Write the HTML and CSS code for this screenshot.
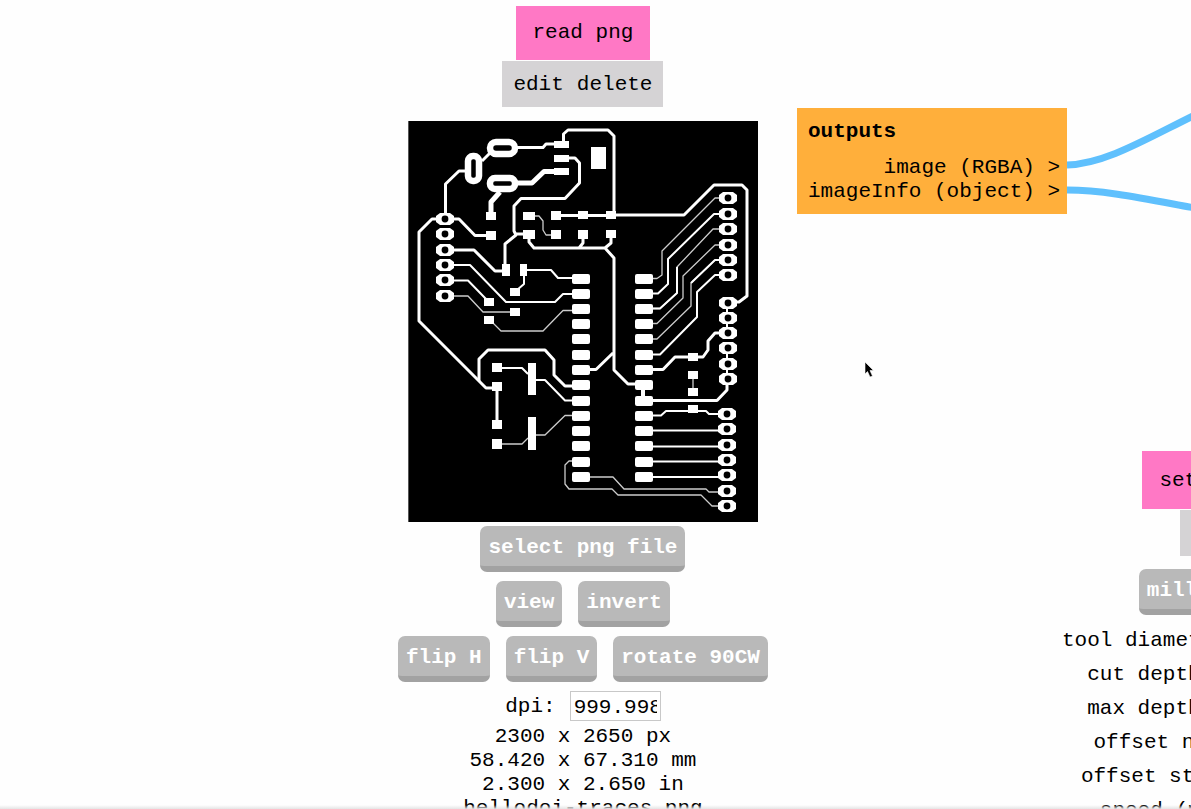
FILE: index.html
```html
<!DOCTYPE html>
<html lang="en">
<head>
<meta charset="utf-8">
<title>mods</title>
<link rel="stylesheet" href="styles.css">
</head>
<body>
<main class="workspace">
  <svg class="wires" aria-hidden="true">
    <path d="M1067 165C1105 164 1146 139 1195 115"/>
    <path d="M1067 190C1105 190 1146 199 1195 208"/>
  </svg>

  <section class="module module-read">
    <h2 class="title">read png</h2>
    <div class="actions"><button type="button">edit</button><button type="button">delete</button></div>
    <svg class="board" viewBox="0 3 350 401" role="img" aria-label="Circuit board traces">
      <defs>
        <g id="pin">
          <path d="M-5-6H5L9-3V3L5 6H-5L-9 3V-3Z" fill="#fff"/>
          <circle r="3.4" fill="#000"/>
        </g>
        <path id="pad" d="M2 0H16Q18 0 18 2V8Q18 10 16 10H2Q0 10 0 8V2Q0 0 2 0Z" fill="#fff"/>
      </defs>
      <rect y="3" width="350" height="401" fill="#000"/>
      <path d="M.5 3V404" stroke="#555"/>
      <g fill="none" stroke="#fff" stroke-linejoin="round">
        <g stroke-width="1.3" stroke="#ccc">
          <path d="M127 98H131L135 103V112L138 117H143"/>
          <path d="M46 178H60L75 194H102M84 204L93 213H135L155 192.500H164"/>
          <path d="M311 80H307L254 133V157L249 160.500H245M311 111H305L269 149V175L252 190.500H245M311 127H307L275 158V180L249 205.500H245M307 142L283 165V188L249 221H245"/>
          <path d="M94 326H114L120 320M128 317H137L157 297.500H164M164 343H161L157 347V366L161 371H204L210 377H293L304 388H311"/>
          <path d="M181 359H205L216 371H298L301 374H311M285 261V271"/>
        </g>
        <g stroke-width="2">
          <path d="M46 147H62L98 184H147L155 176H164M46 162.500H60L78 181M119 152H143L150 160H164M116 157V166L109 172"/>
          <path d="M311 96H306L260 141V166L250 175.500H245M311 142H307L283 165M311 157H307L289 174V199L252 236.500H245M269 149V175L252 190.500H245"/>
          <path d="M94 250H114L120 256M128 262H137L157 282.500H164M319 185V215M319 230V261"/>
          <path d="M245 297.500H253L258 293H298L301 296H311M245 312.500H311M245 328.500H311M245 343.500H311M245 359H311"/>
        </g>
        <g stroke-width="3">
          <path d="M109 29.500H135L138 26H147M155.500 24V16L160 12H200L206 18V97H276L306 67H334L339 72V178L331 184H325"/>
          <path d="M161 40H167L171.500 45V65L157 80.500H113L106 88V113L108 117L97 126V154M106 116H120"/>
          <path d="M57 53H51L37.500 66V98M82 35L74 43M30 101H24L11 114V203L78 270H88M46 101H51L67 117.500H78M46 132H66L87 153H96"/>
          <path d="M148 97.500H202M121 121V124L126 130H197M175 121V125L171 130M203 120V125L197 130L206 140V252L220 266H230M181 251.500H188L205 235"/>
          <path d="M71 263V241L80 232H137L146 242V257L157 268H164M89 269V304"/>
          <path d="M245 251.500H255L267 239H295L300 232V223L307 215H311M319 261V272L309 282.500H245"/>
        </g>
        <path d="M147 53.500H136L124 65H109M92 74L83 84V95" stroke-width="5"/>
        <path d="M235 265V284" stroke-width="4"/>
      </g>
      <g fill="#fff">
        <path d="M146 23h15v7h-15zM146 37h15v7h-15zM146 50h15v7h-15zM183 29h15v22h-15zM78 94h10v8h-10zM78 113h10v9h-10zM115 94h12v8h-12zM115 112h12v9h-12zM143 93h10v9h-10zM143 112h10v9h-10zM170 93h10v8h-10zM170 112h10v9h-10zM198 93h10v8h-10zM198 112h10v8h-10z"/>
        <path d="M94 146h8v12h-8zM112 146h7v12h-7zM102 170h10v8h-10zM76 180h10v8h-10zM76 198h10v8h-10zM102 190h10v8h-10zM84 245h10v9h-10zM84 264h10v9h-10zM84 302h10v9h-10zM84 321h10v10h-10zM120 245h8v32h-8zM120 299h8v33h-8z"/>
        <path d="M280 235h10v8h-10zM280 253h10v8h-10zM280 270h10v8h-10zM280 287h10v8h-10z"/>
      </g>
      <g fill="#000" stroke="#fff" stroke-width="6.500">
        <rect x="82" y="24" width="25" height="12" rx="6"/>
        <rect x="60" y="38" width="11" height="25" rx="5"/>
        <rect x="82" y="60" width="25" height="11" rx="5"/>
      </g>
      <g>
        <use href="#pin" x="37" y="101"/><use href="#pin" x="37" y="116"/><use href="#pin" x="37" y="132"/><use href="#pin" x="37" y="147"/><use href="#pin" x="37" y="162"/><use href="#pin" x="37" y="178"/>
        <use href="#pin" x="320" y="80"/><use href="#pin" x="320" y="96"/><use href="#pin" x="320" y="111"/><use href="#pin" x="320" y="127"/><use href="#pin" x="320" y="142"/><use href="#pin" x="320" y="157"/>
        <use href="#pin" x="320" y="185"/><use href="#pin" x="320" y="200"/><use href="#pin" x="320" y="215"/><use href="#pin" x="320" y="230"/><use href="#pin" x="320" y="246"/><use href="#pin" x="320" y="261"/>
        <use href="#pin" x="319" y="296"/><use href="#pin" x="319" y="311"/><use href="#pin" x="319" y="327"/><use href="#pin" x="319" y="342"/><use href="#pin" x="319" y="357"/><use href="#pin" x="319" y="373"/><use href="#pin" x="319" y="388"/>
      </g>
      <g id="chip-side">
        <use href="#pad" x="164" y="156"/><use href="#pad" x="164" y="171"/><use href="#pad" x="164" y="186"/><use href="#pad" x="164" y="201"/><use href="#pad" x="164" y="216"/><use href="#pad" x="164" y="232"/><use href="#pad" x="164" y="247"/>
        <use href="#pad" x="164" y="262"/><use href="#pad" x="164" y="278"/><use href="#pad" x="164" y="293"/><use href="#pad" x="164" y="308"/><use href="#pad" x="164" y="323"/><use href="#pad" x="164" y="339"/><use href="#pad" x="164" y="354"/>
      </g>
      <use href="#chip-side" x="63"/>
    </svg>
    <div class="keys">
      <div class="key-row"><button class="key" type="button">select png file</button></div>
      <div class="key-row"><button class="key" type="button">view</button><button class="key" type="button">invert</button></div>
      <div class="key-row"><button class="key" type="button">flip H</button><button class="key" type="button">flip V</button><button class="key" type="button">rotate 90CW</button></div>
    </div>
    <div class="field"><label for="dpi">dpi:</label><input id="dpi" class="dpi" type="text" value="999.998"></div>
    <div class="info">
      <div>2300 x 2650 px</div>
      <div>58.420 x 67.310 mm</div>
      <div>2.300 x 2.650 in</div>
      <div>hellodoi-traces.png</div>
    </div>
  </section>

  <section class="outputs">
    <h3>outputs</h3>
    <div>image (RGBA) &gt;</div>
    <div>imageInfo (object) &gt;</div>
  </section>

  <section class="module module-defaults">
    <h2 class="title title-tall">set PCB defaults</h2>
    <div class="actions"><button type="button">edit</button><button type="button">delete</button></div>
    <div class="key-row defaults-keys"><button class="key" type="button">mill traces (1/64)</button></div>
    <div class="setting"><label for="tool">tool diameter (mm):</label><input id="tool" type="text"></div>
    <div class="setting"><label for="cut">cut depth (mm):</label><input id="cut" type="text"></div>
    <div class="setting"><label for="max">max depth (mm):</label><input id="max" type="text"></div>
    <div class="setting"><label for="number">offset number:</label><input id="number" type="text"></div>
    <div class="setting"><label for="step">offset stepover:</label><input id="step" type="text"></div>
    <div class="setting"><label for="speed">speed (mm/s):</label><input id="speed" type="text"></div>
  </section>

  <svg class="pointer" viewBox="0 0 10 17" aria-hidden="true"><path d="M1 1V13L3.500 10.500L6 16L8.500 15L6 9.500H9.500Z" fill="#000" stroke="#fff" stroke-width=".6"/></svg>
</main>
</body>
</html>
```
FILE: styles.css
```css
* {
  box-sizing: border-box;
}

body {
  margin: 0;
  background: #fefefe;
  color: #000;
  font: 21px/24px "Liberation Mono", "Courier New", monospace;
}

button,
input {
  font: inherit;
  color: inherit;
}

.workspace {
  position: relative;
  height: 100vh;
  overflow: hidden;
}

.workspace::after {
  content: "";
  position: absolute;
  inset: auto 0 0;
  height: 4px;
  background: linear-gradient(transparent, #e4e4e4);
}

.wires {
  position: absolute;
  inset: 0;
  width: 100%;
  height: 100%;
  fill: none;
  stroke: #5fc0fd;
  stroke-width: 7px;
}

.module {
  position: absolute;
  display: flex;
  flex-direction: column;
  align-items: center;
  white-space: nowrap;
}

.module-read {
  left: 398px;
  top: 6px;
}

.module-defaults {
  left: 1062px;
  top: 451px;
}

.title {
  margin: 0;
  padding: 15px 17px;
  background: #ff78c5;
  font-size: 21px;
  font-weight: 400;
}

.title-tall {
  padding: 18px 17px 16px;
}

.actions {
  display: flex;
  gap: 13px;
  margin-top: 1px;
  padding: 12px 11px 10px;
  background: #d5d3d5;
}

.actions button {
  padding: 0;
  border: 0;
  background: none;
}

.board {
  display: block;
  width: 350px;
  margin-top: 14px;
}

.keys {
  display: flex;
  flex-direction: column;
  gap: 9px;
  margin-top: 4px;
}

.key-row {
  display: flex;
  justify-content: center;
  gap: 16px;
}

.key {
  padding: 10px 8px 6px;
  border: 0;
  border-bottom: 6px solid #a2a2a2;
  border-radius: 7px;
  background: #b9b9b9;
  color: #fff;
  font-weight: 700;
}

.field {
  display: flex;
  align-items: center;
  gap: 14px;
  margin-top: 9px;
}

.field label {
  padding-top: 2px;
}

.dpi {
  width: 91px;
  height: 30px;
  padding: 2px 3px 0;
  border: 1px solid #c8c8c8;
  background: #fff;
}

.info {
  margin-top: 4px;
  text-align: center;
}

.outputs {
  position: absolute;
  left: 797px;
  top: 108px;
  padding: 12px 7px 10px 11px;
  background: #ffaf3b;
  text-align: right;
  white-space: nowrap;
}

.outputs h3 {
  margin: 0 0 12px;
  font-size: 21px;
  text-align: left;
}

.defaults-keys {
  margin: 13px 0 9px;
}

.setting {
  display: flex;
  align-items: center;
  gap: 13px;
  height: 34px;
}

.setting input {
  width: 144px;
  height: 30px;
  border: 1px solid #c8c8c8;
}

.pointer {
  position: absolute;
  left: 864px;
  top: 361px;
  width: 10px;
  height: 17px;
}
```
